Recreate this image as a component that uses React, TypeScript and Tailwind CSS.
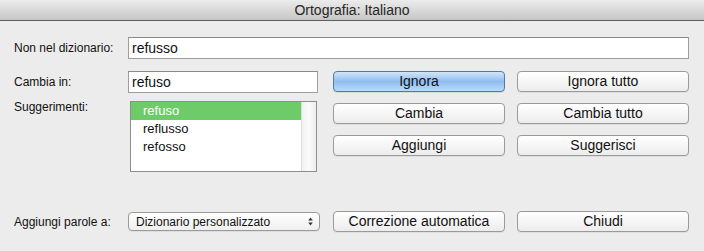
import React from "react";

const font = { fontFamily: '"Liberation Sans", Arial, sans-serif' };

function MacButton({ label, primary = false }: { label: string; primary?: boolean }) {
  return (
    <div
      className={
        primary
          ? "flex h-[21px] w-[172px] items-center justify-center rounded-[4px] border border-[#5577a8] bg-gradient-to-b from-[#d3e5f9] via-[#8fbdf0] to-[#b9dbfb] text-[14px] text-[#111] shadow-[0_1px_0_rgba(0,0,0,0.08)]"
          : "flex h-[21px] w-[172px] items-center justify-center rounded-[4px] border border-[#9a9a9a] bg-gradient-to-b from-[#ffffff] via-[#f6f6f6] to-[#ececec] text-[14px] text-[#111] shadow-[0_1px_0_rgba(0,0,0,0.06)]"
      }
    >
      {label}
    </div>
  );
}

export default function App() {
  return (
    <div className="h-[251px] w-[704px] overflow-hidden bg-[#ececec] text-[#111]" style={font}>
      {/* title bar */}
      <div className="flex h-[21px] items-center justify-center border-b border-[#5e5e5e] bg-gradient-to-b from-[#ececec] to-[#c6c6c6]">
        <span className="text-[14px] text-[#262626]">Ortografia: Italiano</span>
      </div>

      <div className="pl-[14px] pr-[15px]">
        {/* row 1 */}
        <div className="mt-[16px] flex items-center">
          <div className="w-[114px] text-[12px]">Non nel dizionario:</div>
          <div className="flex h-[22px] w-[561px] items-center border border-[#9d9d9d] border-t-[#8a8a8a] bg-white pl-[3px] text-[14px]">
            refusso
          </div>
        </div>

        {/* middle */}
        <div className="mt-[12px] flex">
          <div className="flex w-[304px] flex-col">
            <div className="flex items-center">
              <div className="w-[114px] text-[12px]">Cambia in:</div>
              <div className="flex h-[22px] w-[190px] items-center border border-[#9d9d9d] border-t-[#8a8a8a] bg-white pl-[3px] text-[14px]">
                refuso
              </div>
            </div>
            <div className="mt-[8px] flex items-start">
              <div className="-mt-[3px] w-[116px] text-[12px]">Suggerimenti:</div>
              <div className="flex h-[71px] w-[187px] border border-[#8e8e8e] bg-white">
                <div className="flex flex-1 flex-col text-[13px]">
                  <div className="flex h-[18px] items-center bg-[#6ecb6a] pl-[12px] text-white">refuso</div>
                  <div className="flex h-[18px] items-center pl-[12px]">reflusso</div>
                  <div className="flex h-[18px] items-center pl-[12px]">refosso</div>
                </div>
                <div className="w-[15px] border-l border-[#dedede] bg-gradient-to-r from-[#f2f2f2] via-[#fbfbfb] to-[#ededed]" />
              </div>
            </div>
          </div>

          <div className="ml-[15px] grid grid-cols-[172px_172px] gap-x-[12px] gap-y-[11px] self-start">
            <MacButton label="Ignora" primary />
            <MacButton label="Ignora tutto" />
            <MacButton label="Cambia" />
            <MacButton label="Cambia tutto" />
            <MacButton label="Aggiungi" />
            <MacButton label="Suggerisci" />
          </div>
        </div>

        {/* bottom row */}
        <div className="mt-[39px] flex items-center">
          <div className="w-[114px] text-[12px]">Aggiungi parole a:</div>
          <div className="flex h-[19px] w-[192px] items-center justify-between rounded-[4px] border border-[#9a9a9a] bg-gradient-to-b from-[#ffffff] to-[#efefef] pl-[7px] pr-[6px] text-[12px] shadow-[0_1px_0_rgba(0,0,0,0.06)]">
            <span>Dizionario personalizzato</span>
            <svg width="5" height="9" viewBox="0 0 5 9">
              <path d="M2.5 0.5 L4.8 3.5 L0.2 3.5 Z" fill="#333" />
              <path d="M2.5 8.5 L4.8 5.5 L0.2 5.5 Z" fill="#333" />
            </svg>
          </div>
          <div className="ml-[13px] flex gap-[12px]">
            <MacButton label="Correzione automatica" />
            <MacButton label="Chiudi" />
          </div>
        </div>
      </div>
    </div>
  );
}
